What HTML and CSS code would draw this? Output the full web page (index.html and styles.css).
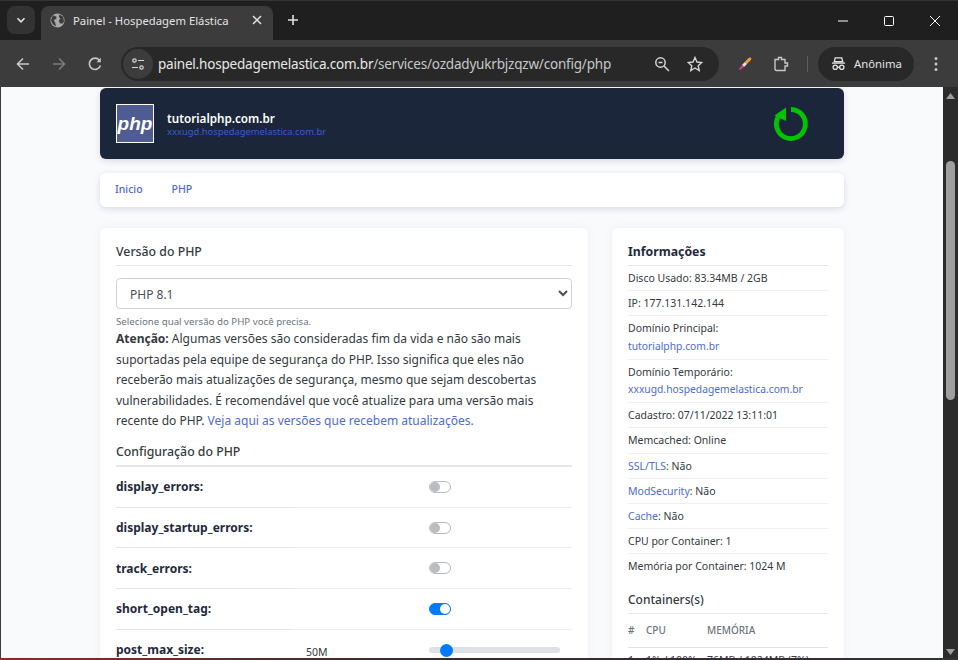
FILE: index.html
```html
<!DOCTYPE html>
<html lang="pt-BR">

<head>
    <meta charset="UTF-8">
    <title>Painel - Hospedagem Elástica</title>
    <link rel="stylesheet" href="styles.css">
</head>

<body>
    <div class="janela">
        <div class="abas">
            <div class="abas-menu">
                <svg width="12" height="12" viewBox="0 0 12 12"><path d="M2.500 4.200 6 7.800l3.500-3.600" fill="none" stroke="#e3e3e3" stroke-width="1.600"/></svg>
            </div>
            <div class="aba">
                <svg width="15" height="15" viewBox="0 0 16 16"><circle cx="8" cy="8" r="7.500" fill="#a8a8a8"/><path d="M3 2.500 7 4 6.500 6.500 4 7.500 5.500 10 6.500 14.500 3 12 1 8zM10 1.500 14 4l1 5-2 2.500-2.500-.5-1-3 1.500-2-1.500-2z" fill="#3c3c3c"/></svg>
                <span class="aba-titulo">Painel - Hospedagem Elástica</span>
                <svg width="10" height="10" viewBox="0 0 10 10"><path d="M1 1l8 8M9 1 1 9" stroke="#e3e3e3" stroke-width="1.500"/></svg>
            </div>
            <svg class="aba-nova" width="12" height="12" viewBox="0 0 12 12"><path d="M6 1v10M1 6h10" stroke="#e3e3e3" stroke-width="1.600"/></svg>
            <div class="controles">
                <svg width="12" height="12" viewBox="0 0 12 12"><path d="M1 6h10" stroke="#fff"/></svg>
                <svg width="12" height="12" viewBox="0 0 12 12"><rect x="1.500" y="1.500" width="9" height="9" rx="1" fill="none" stroke="#fff"/></svg>
                <svg width="12" height="12" viewBox="0 0 12 12"><path d="M1 1l10 10M11 1 1 11" stroke="#fff"/></svg>
            </div>
        </div>

        <div class="barra">
            <div class="nav-icones">
                <svg width="16" height="16" viewBox="0 0 16 16"><path d="M14 8H3M8 2.500 2.500 8 8 13.500" fill="none" stroke="#c7c7c7" stroke-width="1.600"/></svg>
                <svg width="16" height="16" viewBox="0 0 16 16"><path d="M2 8h11M8 2.500 13.500 8 8 13.500" fill="none" stroke="#7c7c7c" stroke-width="1.600"/></svg>
                <svg width="16" height="16" viewBox="0 0 16 16"><path d="M13.500 9.500A5.700 5.700 0 1 1 12.500 4.200" fill="none" stroke="#c7c7c7" stroke-width="1.600"/><path d="M13.800 1.800v4.400H9.400z" fill="#c7c7c7"/></svg>
            </div>
            <div class="endereco">
                <span class="chip">
                    <svg width="14" height="14" viewBox="0 0 14 14"><g fill="none" stroke="#d5d5d5" stroke-width="1.200"><circle cx="3.500" cy="3.500" r="1.700"/><path d="M7 3.500h6M1 10.500h6"/><circle cx="10.500" cy="10.500" r="1.700"/></g></svg>
                </span>
                <span class="url"><b>painel.hospedagemelastica.com.br</b>/services/ozdadyukrbjzqzw/config/php</span>
                <svg width="16" height="16" viewBox="0 0 16 16"><circle cx="6.500" cy="6.500" r="4.700" fill="none" stroke="#d5d5d5" stroke-width="1.500"/><path d="M10 10l5 5M4.500 6.500h4" stroke="#d5d5d5" stroke-width="1.500"/></svg>
                <svg width="16" height="16" viewBox="0 0 16 16"><path d="M8 1.500 10 6l4.800.500-3.600 3.200 1 4.800L8 12l-4.200 2.500 1-4.800L1.200 6.500 6 6z" fill="none" stroke="#d5d5d5" stroke-width="1.400"/></svg>
            </div>
            <svg class="ico-pena" width="14" height="14" viewBox="0 0 14 14"><path d="M12.800.8c.8.700.6 1.500 0 2.200L9 7 6.800 5 10.600 1c.7-.6 1.500-.8 2.200-.2z" fill="#f0a030"/><path d="M6.800 5 9 7 6 10 4 8z" fill="#e8e0d8"/><path d="M4 8l2 2-3.200 2.500-1.800.6.600-1.800z" fill="#d83a8c"/></svg>
            <svg class="ico-ext" width="16" height="16" viewBox="0 0 16 16"><path d="M2 3.500h3.500V1.500h3v2H12v3.500h2.500v3H12v4.500H3.500a1.500 1.500 0 0 1-1.500-1.500z" fill="none" stroke="#c7c7c7" stroke-width="1.400"/></svg>
            <span class="separador"></span>
            <div class="anonima">
                <svg width="15" height="15" viewBox="0 0 16 16"><path d="M4.500 2h7l1 4h-9zM1 7.500h14" fill="none" stroke="#e3e3e3" stroke-width="1.400"/><circle cx="4.500" cy="12" r="2.300" fill="none" stroke="#e3e3e3" stroke-width="1.400"/><circle cx="11.500" cy="12" r="2.300" fill="none" stroke="#e3e3e3" stroke-width="1.400"/><path d="M6.800 12h2.400" stroke="#e3e3e3" stroke-width="1.400"/></svg>
                <span>Anônima</span>
            </div>
            <svg class="ico-menu" width="4" height="16" viewBox="0 0 4 16"><circle cx="2" cy="2.500" r="1.500" fill="#c7c7c7"/><circle cx="2" cy="8" r="1.500" fill="#c7c7c7"/><circle cx="2" cy="13.500" r="1.500" fill="#c7c7c7"/></svg>
        </div>

        <div class="tela">
            <div class="pagina">
                <div class="topo">
                    <div class="logo-php">php</div>
                    <div class="topo-textos">
                        <div class="topo-nome">tutorialphp.com.br</div>
                        <a href="#" class="topo-dominio">xxxugd.hospedagemelastica.com.br</a>
                    </div>
                    <svg class="ico-reiniciar" width="36" height="36" viewBox="0 0 36 36"><path d="M18 3.500A14.500 14.500 0 1 1 6.500 9" fill="none" stroke="#00c400" stroke-width="4.800"/><path d="M13 1.500 1.500 9.500 13 15z" fill="#00c400"/></svg>
                </div>

                <div class="menu">
                    <a href="#">Inicio</a>
                    <a href="#">PHP</a>
                </div>

                <div class="colunas">
                    <div class="cartao cartao-principal">
                        <h5 class="titulo">Versão do PHP</h5>
                        <select class="seletor">
                            <option>PHP 8.1</option>
                        </select>
                        <small class="ajuda">Selecione qual versão do PHP você precisa.</small>
                        <p class="aviso"><strong>Atenção:</strong> Algumas versões são consideradas fim da vida e não são mais suportadas pela equipe de segurança do PHP. Isso significa que eles não receberão mais atualizações de segurança, mesmo que sejam descobertas vulnerabilidades. É recomendável que você atualize para uma versão mais recente do PHP. <a href="#">Veja aqui as versões que recebem atualizações.</a></p>
                        <h5 class="titulo titulo-config">Configuração do PHP</h5>
                        <div class="linha">
                            <span class="nome">display_errors:</span>
                            <span class="valor"></span>
                            <span class="chave"></span>
                        </div>
                        <div class="linha">
                            <span class="nome">display_startup_errors:</span>
                            <span class="valor"></span>
                            <span class="chave"></span>
                        </div>
                        <div class="linha">
                            <span class="nome">track_errors:</span>
                            <span class="valor"></span>
                            <span class="chave"></span>
                        </div>
                        <div class="linha">
                            <span class="nome">short_open_tag:</span>
                            <span class="valor"></span>
                            <span class="chave ligada"></span>
                        </div>
                        <div class="linha">
                            <span class="nome">post_max_size:</span>
                            <span class="valor">50M</span>
                            <span class="trilho"><span class="botao-trilho"></span></span>
                        </div>
                    </div>

                    <div class="cartao cartao-info">
                        <h5 class="titulo titulo-info">Informações</h5>
                        <ul class="infos">
                            <li>Disco Usado: 83.34MB / 2GB</li>
                            <li>IP: 177.131.142.144</li>
                            <li class="duplo">Domínio Principal:<br><a href="#">tutorialphp.com.br</a></li>
                            <li class="duplo">Domínio Temporário:<br><a href="#">xxxugd.hospedagemelastica.com.br</a></li>
                            <li>Cadastro: 07/11/2022 13:11:01</li>
                            <li>Memcached: Online</li>
                            <li><a href="#">SSL/TLS</a>: Não</li>
                            <li><a href="#">ModSecurity</a>: Não</li>
                            <li><a href="#">Cache</a>: Não</li>
                            <li>CPU por Container: 1</li>
                            <li>Memória por Container: 1024 M</li>
                        </ul>
                        <h5 class="titulo titulo-containers">Containers(s)</h5>
                        <table class="tabela">
                            <thead>
                                <tr><th>#</th><th>CPU</th><th>MEMÓRIA</th></tr>
                            </thead>
                            <tbody>
                                <tr><td>1</td><td>1% / 100%</td><td>76MB / 1024MB (7%)</td></tr>
                            </tbody>
                        </table>
                    </div>
                </div>
            </div>

            <div class="rolagem">
                <svg width="9" height="6" viewBox="0 0 9 6"><path d="M4.500 0 9 6H0z" fill="#9c9c9c"/></svg>
                <div class="rolagem-miolo"><div class="rolagem-barra"></div></div>
                <svg width="9" height="6" viewBox="0 0 9 6"><path d="M0 0h9L4.500 6z" fill="#9c9c9c"/></svg>
            </div>
        </div>
        <div class="rodape-janela"></div>
    </div>
</body>

</html>
```

FILE: styles.css
```css
* {
    box-sizing: border-box;
}

html,
body {
    margin: 0;
    padding: 0;
    height: 660px;
    overflow: hidden;
}

body {
    font-family: "Noto Sans", "Open Sans", sans-serif;
    background-color: #1f1f1f;
    color: #212529;
}

.janela {
    width: 958px;
    height: 660px;
    display: flex;
    flex-direction: column;
}

/* abas do navegador */
.abas {
    height: 40px;
    flex: none;
    display: flex;
    align-items: flex-end;
    background-color: #1f1f1f;
    border-top: 1px solid #333;
    padding-left: 7px;
}

.abas-menu {
    width: 28px;
    height: 28px;
    margin-bottom: 6px;
    margin-right: 6px;
    border-radius: 8px;
    background-color: #333;
    display: flex;
    align-items: center;
    justify-content: center;
}

.aba {
    width: 232px;
    height: 34px;
    padding: 0 11px 6px 9px;
    display: flex;
    align-items: center;
    background-color: #3c3c3c;
    border-radius: 8px 8px 0 0;
    color: #e3e3e3;
}

.aba-titulo {
    flex: 1;
    font-size: 11.300px;
    margin-left: 8px;
}

.aba-nova {
    margin: 0 0 14px 14px;
}

.controles {
    margin-left: auto;
    width: 121px;
    padding: 0 17px 0 0;
    display: flex;
    justify-content: space-between;
    align-self: center;
}

/* barra de endereco */
.barra {
    height: 47px;
    flex: none;
    display: flex;
    align-items: center;
    background-color: #3c3c3c;
}

.nav-icones {
    width: 121px;
    padding: 0 18px 0 15px;
    display: flex;
    justify-content: space-between;
}

.endereco {
    width: 598px;
    height: 34px;
    padding: 0 16px 0 2px;
    display: flex;
    align-items: center;
    gap: 17px;
    border-radius: 17px;
    background-color: #282828;
}

.chip {
    width: 30px;
    height: 30px;
    margin-right: -12px;
    display: flex;
    align-items: center;
    justify-content: center;
    border-radius: 50%;
    background-color: #3c3c3c;
}

.url {
    flex: 1;
    font-size: 13.500px;
    letter-spacing: -0.2px;
    color: #c7c7c7;
    white-space: nowrap;
}

.url b {
    font-weight: 400;
    color: #e8e8e8;
}

.ico-pena {
    margin-left: 19px;
}

.ico-ext {
    margin-left: 21px;
}

.separador {
    width: 1px;
    height: 16px;
    margin: 0 10px 0 18px;
    background-color: #5e5e5e;
}

.anonima {
    width: 96px;
    height: 34px;
    padding-left: 13px;
    display: flex;
    align-items: center;
    gap: 8px;
    border-radius: 17px;
    background-color: #282828;
    color: #e3e3e3;
    font-size: 11.300px;
}

.ico-menu {
    margin-left: 20px;
}

/* area da pagina */
.tela {
    height: 571px;
    flex: none;
    display: flex;
    border-left: 1px solid #3c3c3c;
    overflow: hidden;
}

.pagina {
    flex: 1;
    padding: 1px 99px 0 99px;
    background-color: #f9fafc;
    overflow: hidden;
}

.rolagem {
    width: 15px;
    flex: none;
    padding: 6px 3px 3px 3px;
    display: flex;
    flex-direction: column;
    align-items: flex-start;
    background-color: #2c2c2c;
}

.rolagem-miolo {
    flex: 1;
    width: 9px;
    padding-top: 62px;
}

.rolagem-barra {
    height: 239px;
    border-radius: 5px;
    background-color: #9f9f9f;
}

.rodape-janela {
    height: 2px;
    flex: none;
    background: linear-gradient(90deg, #8a2e22, #3a2a2a 45%, #3c2a34 75%, #333);
}

.topo {
    height: 71px;
    padding: 0 35px 0 16px;
    display: flex;
    align-items: center;
    border-radius: 6px;
    background-color: #1b263b;
    box-shadow: 0 2px 6px rgba(30, 50, 90, 0.15);
}

.logo-php {
    width: 38px;
    height: 39px;
    display: flex;
    align-items: center;
    justify-content: center;
    background-color: #4f5b93;
    border: 1px solid #fff;
    color: #fff;
    font-family: "Liberation Sans", sans-serif;
    font-size: 19px;
    font-weight: 700;
    font-style: italic;
}

.topo-textos {
    flex: 1;
    margin-left: 13px;
}

.topo-nome {
    color: #fff;
    font-size: 11.700px;
    font-weight: 600;
    line-height: 16px;
}

.topo-dominio {
    display: block;
    color: #3b5bc8;
    font-size: 9.400px;
    line-height: 12px;
    text-decoration: none;
}

.menu {
    height: 34px;
    margin-top: 14px;
    padding: 0 0 2px 15px;
    display: flex;
    align-items: center;
    gap: 29px;
    border-radius: 6px;
    background-color: #fff;
    box-shadow: 0 2px 6px rgba(30, 50, 90, 0.15);
}

.menu a {
    color: #4f6bd5;
    font-size: 10.500px;
    font-weight: 500;
    text-decoration: none;
}

.colunas {
    margin-top: 21px;
    display: flex;
    gap: 24px;
    align-items: flex-start;
}

.cartao {
    padding: 16px;
    border-radius: 6px;
    background-color: #fff;
    box-shadow: 0 0 8px rgba(30, 50, 90, 0.06);
}

.cartao-principal {
    width: 488px;
}

.cartao-info {
    width: 232px;
}

.titulo {
    margin: 0;
    height: 22px;
    font-size: 12.300px;
    font-weight: 500;
    line-height: 15px;
    color: #343a40;
    border-bottom: 1px solid #e4e6e8;
}

.seletor {
    display: block;
    width: 100%;
    height: 31px;
    margin-top: 12px;
    padding: 1px 8px 0 9px;
    border: 1px solid #ced4da;
    border-radius: 4px;
    background-color: #fff;
    color: #495057;
    font-family: inherit;
    font-size: 12px;
}

.ajuda {
    display: block;
    margin-top: 7px;
    font-size: 9.700px;
    line-height: 12px;
    color: #6c757d;
}

.aviso {
    margin: 1px 0 0;
    font-size: 12px;
    line-height: 20.600px;
    color: #343a40;
}

.aviso a,
.infos a {
    color: #4f6bd5;
    text-decoration: none;
}

.titulo-config {
    height: 26px;
    margin-top: 9px;
    border-bottom-width: 2px;
    color: #343a40;
    padding-top: 3px;
}

.linha {
    height: 40.700px;
    display: flex;
    align-items: center;
    border-bottom: 1px solid #eceef0;
}

.nome {
    width: 178px;
    height: calc(100% + 1px);
    margin: 0 12px -1px 0;
    display: flex;
    align-items: center;
    border-bottom: 1px solid #e2e4e6;
    font-size: 12px;
    font-weight: 700;
    white-space: nowrap;
    color: #1f2a3c;
}

.valor {
    width: 123px;
    font-size: 10.500px;
    color: #343a40;
    padding-top: 4px;
}

.chave {
    position: relative;
    width: 22px;
    height: 12px;
    border: 1px solid #b9bcc0;
    border-radius: 6px;
    background-color: #fff;
}

.chave::after {
    content: "";
    position: absolute;
    left: 0;
    top: 0;
    width: 10px;
    height: 10px;
    border-radius: 50%;
    background-color: #b9bcc0;
}

.chave.ligada {
    background-color: #007bff;
    border-color: #007bff;
}

.chave.ligada::after {
    left: 10px;
    background-color: #fff;
}

.trilho {
    position: relative;
    width: 131px;
    height: 6px;
    border-radius: 3px;
    background-color: #dee2e6;
}

.botao-trilho {
    position: absolute;
    left: 11px;
    top: -3px;
    width: 13px;
    height: 13px;
    border-radius: 50%;
    background-color: #007bff;
}

.titulo-info {
    font-weight: 700;
    color: #1f2a3c;
}

.titulo-containers {
    margin-top: 13px;
    height: 22px;
    font-size: 12px;
}

.infos {
    list-style: none;
    margin: 0;
    padding: 0;
    font-size: 10.500px;
    color: #343a40;
}

.infos li {
    padding: 5px 0;
    line-height: 14.200px;
    border-bottom: 1px solid #eef0f2;
}

.infos li:last-child {
    border-bottom: none;
}

.infos li.duplo {
    padding: 4px 0;
    line-height: 17.200px;
}

.infos li.duplo a {
    font-size: 10.300px;
}

.tabela {
    width: 100%;
    border-collapse: collapse;
    font-size: 10.500px;
    color: #343a40;
}

.tabela th {
    height: 34px;
    padding: 0;
    text-align: left;
    font-weight: 500;
    font-size: 10px;
    color: #6c757d;
    border-bottom: 1px solid #dfe1e3;
}

.tabela td {
    padding: 5px 0;
    white-space: nowrap;
}

.tabela th:first-child {
    width: 18px;
}

.tabela th:nth-child(2) {
    width: 61px;
}
```
